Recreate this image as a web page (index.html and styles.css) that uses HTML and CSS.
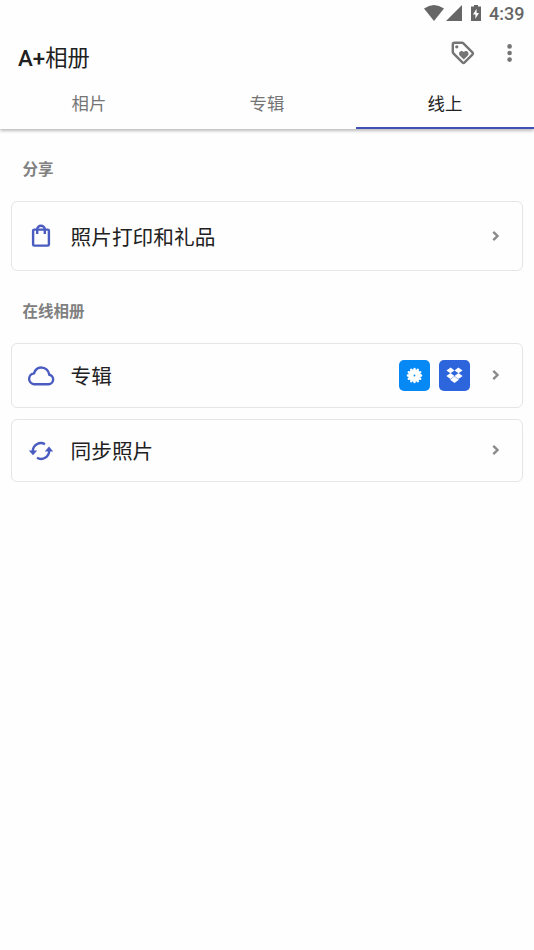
FILE: index.html
```html
<!DOCTYPE html>
<html lang="zh-CN">
<head>
<meta charset="utf-8">
<title>A+相册</title>
<link rel="stylesheet" href="styles.css">
</head>
<body>
<header class="header">
  <div class="status">
    <svg class="wifi" width="20" height="16" viewBox="0 0 20 16"><path d="M0 3.5Q10-3.5 20 3.5L10 16Z"/></svg>
    <svg class="signal" width="16" height="16" viewBox="0 0 16 16"><path d="M16 0V16H0Z"/></svg>
    <svg class="battery" width="10" height="16" viewBox="0 0 10 16"><path fill-rule="evenodd" d="M3 0h4v1.6h3V16H0V1.6h3zM5.6 3.8L2 9.5h2.4v4.2L8 8H5.6z"/></svg>
    <span class="time">4:39</span>
  </div>
  <div class="toolbar">
    <h1 class="title">A+<span class="title-cjk">相册</span></h1>
    <svg class="tag" width="24" height="24" viewBox="0 0 24 24"><path class="tag-line" d="M3.5 1.8H11q.8 0 1.4.6l9 9q1.1 1.1 0 2.2l-7.8 7.8q-1.1 1.1-2.2 0l-9-9q-.6-.6-.6-1.4V3.5q0-1.7 1.7-1.7z"/><circle cx="5.8" cy="5.8" r="1.6"/><path d="M12.8 18.6L8.7 14.4c-2.2-2.9 1.7-6.2 4.1-3.3 2.4-2.9 6.3.4 4.1 3.3z"/></svg>
    <svg class="more" width="6" height="20" viewBox="0 0 6 20"><circle cx="2.6" cy="3.4" r="2.3"/><circle cx="2.6" cy="10" r="2.3"/><circle cx="2.6" cy="16.6" r="2.3"/></svg>
  </div>
  <nav class="tabs">
    <a class="tab">相片</a>
    <a class="tab">专辑</a>
    <a class="tab active">线上</a>
  </nav>
</header>
<main class="content">
  <h2 class="section">分享</h2>
  <div class="card print">
    <svg class="icon" width="28" height="28" viewBox="0 0 28 28"><rect x="6.1" y="7.6" width="15.8" height="16" rx="1.2"/><path d="M10.2 12V7.5a3.8 3.8 0 0 1 7.6 0V12"/></svg>
    <span class="label">照片打印和礼品</span>
    <svg class="chevron" width="8" height="12" viewBox="0 0 8 12"><path d="M1.3 1.8L5.5 6L1.3 10.2"/></svg>
  </div>
  <h2 class="section online">在线相册</h2>
  <div class="card albums">
    <svg class="icon" width="28" height="28" viewBox="0 0 28 28"><path d="M6.8 22.2h14.7a4.8 4.8 0 0 0 .8-9.5C20.4 3.7 9.6 3.2 7.1 11.2A5.55 5.55 0 0 0 6.8 22.2z"/></svg>
    <span class="label">专辑</span>
    <span class="badge cloud-service"><svg width="17" height="17" viewBox="-8.5 -8.5 17 17"><circle r="6.2"/><path class="petals" d="M0-6.6V6.6M-6.6 0H6.6M-3.3-5.72L3.3 5.72M3.3-5.72L-3.3 5.72M-5.72-3.3L5.72 3.3M-5.72 3.3L5.72-3.3"/><circle class="hole" r=".9"/></svg></span>
    <span class="badge dropbox"><svg width="17" height="17" viewBox="0 0 17 17"><path d="M4.7.5L8.5 3.4 4.5 6.3.4 3.4zM12.3.5L16.6 3.4 12.5 6.3 8.5 3.4zM4.5 5.9L8.5 8.9 4.5 12.1.4 9zM12.5 5.9L16.6 9 12.5 12.1 8.5 8.9zM8.5 9.6L12.9 12.7 8.5 16 4.1 12.7z"/></svg></span>
    <svg class="chevron" width="8" height="12" viewBox="0 0 8 12"><path d="M1.3 1.8L5.5 6L1.3 10.2"/></svg>
  </div>
  <div class="card sync">
    <svg class="icon" width="28" height="28" viewBox="0 0 28 28"><path d="M5.8 14.5A8.2 8.2 0 0 1 18 7.2M22.2 13.5A8.2 8.2 0 0 1 10 20.8"/><path class="arrow" d="M1.8 13.4h8.4L6 18.2zM17.8 14.4h8.4L22 9.6z"/></svg>
    <span class="label">同步照片</span>
    <svg class="chevron" width="8" height="12" viewBox="0 0 8 12"><path d="M1.3 1.8L5.5 6L1.3 10.2"/></svg>
  </div>
</main>
</body>
</html>
```
FILE: styles.css
```css
* { box-sizing: border-box; }
body {
  margin: 0;
  background: #fefefe;
  color: #212121;
  font-family: Roboto, "Noto Sans CJK SC", sans-serif;
}
svg { display: block; flex: none; }
.header {
  height: 129px;
  background: #fefefe;
  box-shadow: 0 2px 3px rgba(0, 0, 0, .26);
}
.status {
  height: 28px;
  display: flex;
  align-items: center;
  justify-content: flex-end;
  padding: 0 9.5px 2px 0;
  color: #666;
  fill: #666;
}
.signal { margin-left: 2px; }
.battery { margin: 0 8px 0 9px; }
.time { font-size: 18px; line-height: 26px; font-weight: 500; padding-top: 2px; }
.toolbar {
  height: 51px;
  display: flex;
  align-items: flex-start;
  padding: 0 21.5px 0 18px;
  fill: #757575;
}
.title { margin: 14px auto 0 0; font-size: 22.3px; line-height: 32px; font-weight: 500; }
.title-cjk { font-weight: 400; }
.tag { margin: 13px 31.5px 0 0; }
.tag-line { fill: none; stroke: #757575; stroke-width: 2.4; }
.more { margin-top: 15px; }
.tabs { display: grid; grid-template-columns: repeat(3, 1fr); height: 50px; }
.tab {
  padding-top: 10px;
  text-align: center;
  font-size: 17.4px;
  line-height: 30px;
  color: #757575;
}
.tab.active { color: #212121; border-bottom: 2px solid #3f51b5; }
.content { padding: 29px 11px 0; }
.section {
  margin: 0 0 19px 11.5px;
  font-size: 15.5px;
  line-height: 24px;
  font-weight: 600;
  color: #808080;
}
.section.online { margin-top: 29px; }
.card {
  display: flex;
  align-items: center;
  border: 1px solid #e5e5e5;
  border-radius: 6px;
  padding: 0 22px 0 15px;
}
.print { height: 70px; }
.albums { height: 65px; margin-bottom: 11px; }
.sync { height: 63px; }
.icon { fill: none; stroke: #4a5cc0; stroke-width: 2.4; }
.arrow { fill: #4a5cc0; stroke: none; }
.label { margin: 0 auto 0 15.5px; padding-top: 3px; font-size: 20.7px; line-height: 30px; }
.badge {
  width: 31px;
  height: 31px;
  margin-right: 9px;
  border-radius: 5px;
  display: flex;
  align-items: center;
  justify-content: center;
  fill: #fff;
}
.cloud-service { background: #0688f5; }
.dropbox { background: #2c65dc; margin-right: 22px; }
.petals { fill: none; stroke: #fff; stroke-width: 2.4; stroke-linecap: round; }
.hole { fill: #0688f5; }
.chevron { fill: none; stroke: #8a8a8a; stroke-width: 2.4; margin-bottom: 1px; }
```
